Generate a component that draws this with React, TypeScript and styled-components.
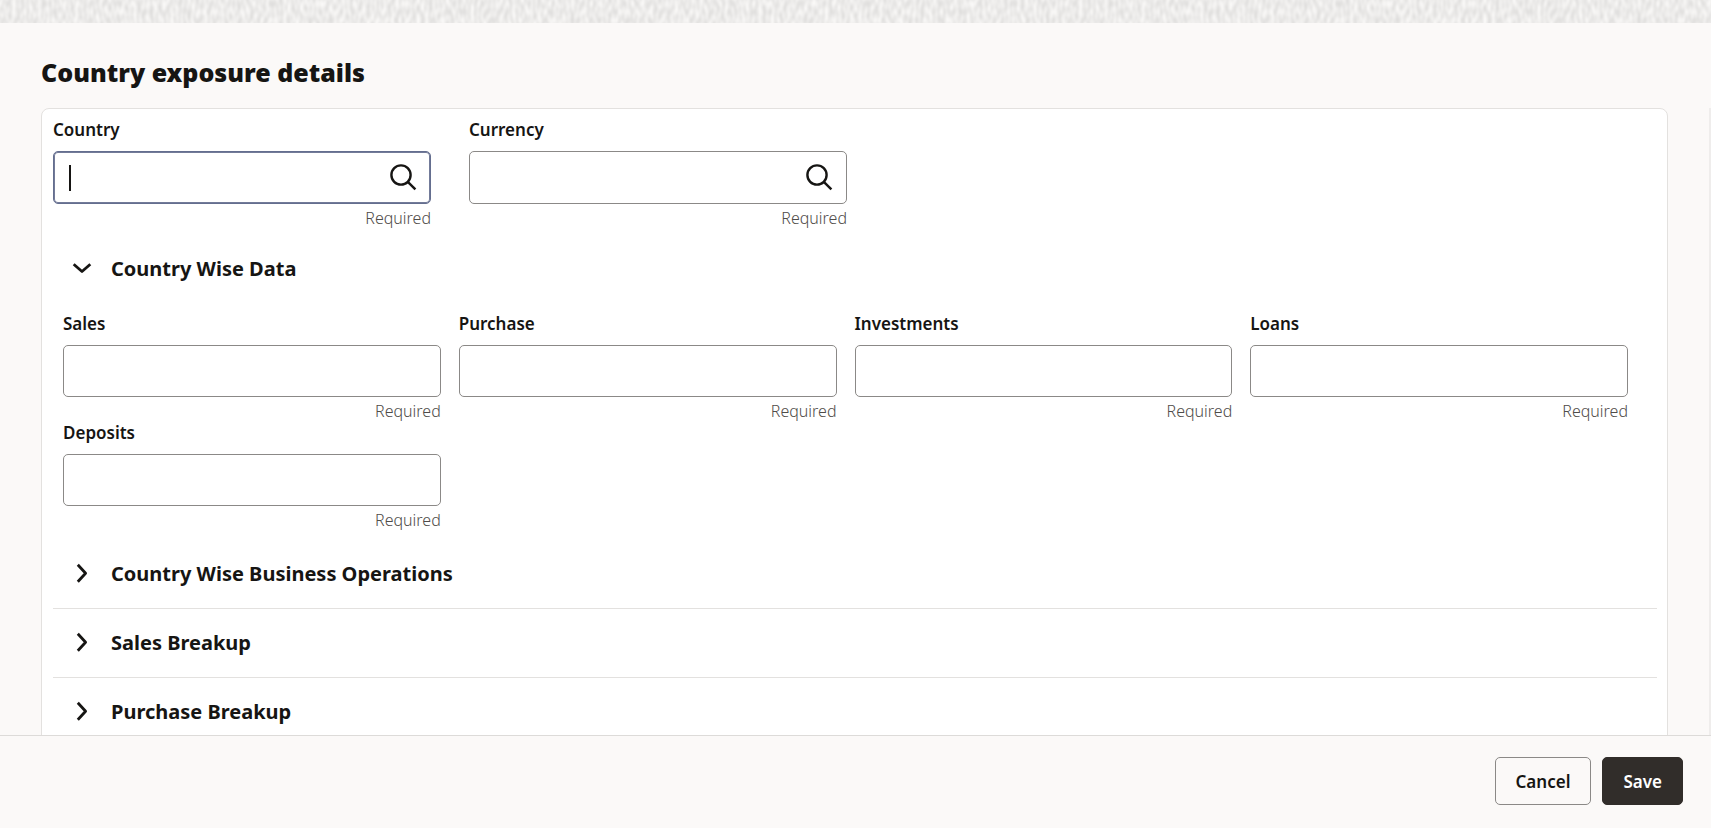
import React, { useId, useState } from "react";
import styled, { createGlobalStyle, css } from "styled-components";

const GlobalStyle = createGlobalStyle`
  *, *::before, *::after { box-sizing: border-box; }
  body {
    margin: 0;
    background: #fbf9f8;
    color: #161513;
    font-family: "Noto Sans", "Open Sans", sans-serif;
    font-size: 16px;
  }
`;

const Shell = styled.div`
  display: flex;
  flex-direction: column;
  height: 100vh;
`;

const Texture = styled.svg`
  display: block;
  flex: none;
  width: 100%;
  height: 23px;
`;

const Main = styled.main`
  flex: 1;
  min-height: 0;
  overflow: auto;
  scrollbar-width: none;
`;

const PageTitle = styled.h1`
  margin: 0;
  padding: 31px 41px 18px;
  font-size: 25px;
  line-height: 36px;
  font-weight: 900;
`;

const Columns = styled.div`
  display: flex;
  gap: 41px;
  padding-left: 41px;
`;

const Card = styled.form`
  flex: 1;
  min-width: 0;
  padding: 8px 10px 11px 11px;
  background: #fff;
  border: 1px solid #e3e1df;
  border-radius: 8px 8px 0 0;
`;

const NextPanel = styled.aside`
  flex: none;
  width: 2px;
  background: #efedec;
`;

const LookupRow = styled.div`
  display: grid;
  grid-template-columns: repeat(2, minmax(0, 378px));
  gap: 38px;
  margin-bottom: 8px;
`;

const FieldGrid = styled.div`
  display: grid;
  grid-template-columns: repeat(4, minmax(0, 1fr));
  column-gap: 18px;
  padding: 8px 29px 10px 10px;
`;

const FieldRoot = styled.div`
  display: flex;
  flex-direction: column;
`;

const Label = styled.label`
  margin-bottom: 8px;
  font-size: 17px;
  line-height: 26px;
  font-weight: 600;
`;

const Control = styled.div<{ $active?: boolean; $lookup?: boolean }>`
  display: flex;
  align-items: center;
  height: ${(p) => (p.$lookup ? 53 : 52)}px;
  padding: 0 13px 0 15px;
  background: #fff;
  border: 1px solid #8b8987;
  border-radius: 5px;
  ${(p) =>
    p.$active &&
    css`
      border-color: #646e8f;
      box-shadow: inset 0 0 0 1px #737b99;
    `}
`;

const Caret = styled.span`
  flex: none;
  width: 2px;
  height: 26px;
  background: #161513;
`;

const Input = styled.input`
  flex: 1;
  min-width: 0;
  height: 100%;
  padding: 0;
  border: 0;
  outline: 0;
  background: transparent;
  color: inherit;
  font: inherit;
`;

const IconButton = styled.button`
  display: flex;
  flex: none;
  padding: 0;
  border: 0;
  background: none;
  color: inherit;
  cursor: pointer;
`;

const Hint = styled.span`
  padding-top: 5px;
  align-self: flex-end;
  color: #4f4c49;
  font-size: 16px;
  line-height: 18px;
  font-weight: 300;
`;

const Section = styled.section<{ $ruled?: boolean }>`
  border-bottom: 1px solid ${(p) => (p.$ruled ? "#e3e1df" : "transparent")};
`;

const SectionHeading = styled.h2`
  margin: 0;
  font-size: 20px;
  line-height: 28px;
  font-weight: 700;
`;

const SectionToggle = styled.button`
  display: flex;
  align-items: center;
  gap: 15px;
  width: 100%;
  padding: 20px 16px;
  border: 0;
  background: none;
  color: inherit;
  font: inherit;
  text-align: left;
  cursor: pointer;
`;

const Footer = styled.footer`
  display: flex;
  flex: none;
  justify-content: flex-end;
  gap: 11px;
  padding: 21px 28px 23px;
  border-top: 1px solid #dddbd9;
`;

const Button = styled.button<{ $primary?: boolean }>`
  height: 48px;
  padding: 0 20px;
  border: 1px solid ${(p) => (p.$primary ? "#312d2a" : "#8b8987")};
  border-radius: 5px;
  background: ${(p) => (p.$primary ? "#312d2a" : "transparent")};
  color: ${(p) => (p.$primary ? "#fff" : "#161513")};
  font-family: inherit;
  font-size: 17px;
  font-weight: 600;
  cursor: pointer;
`;

const SearchIcon = () => (
  <svg width="28" height="28" viewBox="0 0 28 28" fill="none" stroke="currentColor" strokeWidth="2.4" aria-hidden="true">
    <circle cx="12" cy="11" r="9.6" />
    <path d="M18.8 17.8 26.4 25.4" />
  </svg>
);

const Chevron = ({ open }: { open: boolean }) => (
  <svg width="27" height="26" viewBox="0 0 27 26" fill="none" stroke="currentColor" strokeWidth="2.8" strokeLinejoin="round" aria-hidden="true">
    <path d={open ? "M4.7 8.2 13 15.5 21.3 8.2" : "M8.8 3.7 16.6 12.2 8.8 20.7"} />
  </svg>
);

type FieldProps = { label: string; lookup?: boolean; active?: boolean };

function Field({ label, lookup, active }: FieldProps) {
  const id = useId();
  return (
    <FieldRoot>
      <Label htmlFor={id}>{label}</Label>
      <Control $active={active} $lookup={lookup}>
        {active && <Caret />}
        <Input id={id} type="text" required />
        {lookup && (
          <IconButton type="button" aria-label={`Search ${label}`}>
            <SearchIcon />
          </IconButton>
        )}
      </Control>
      <Hint>Required</Hint>
    </FieldRoot>
  );
}

type PanelProps = { title: string; initiallyOpen?: boolean; children?: React.ReactNode };

function Panel({ title, initiallyOpen = false, children }: PanelProps) {
  const [open, setOpen] = useState(initiallyOpen);
  return (
    <Section $ruled={!open}>
      <SectionHeading>
        <SectionToggle type="button" aria-expanded={open} onClick={() => setOpen(!open)}>
          <Chevron open={open} />
          {title}
        </SectionToggle>
      </SectionHeading>
      {open && children}
    </Section>
  );
}

const amounts = ["Sales", "Purchase", "Investments", "Loans", "Deposits"];
const breakups = ["Country Wise Business Operations", "Sales Breakup", "Purchase Breakup"];

export default function App() {
  return (
    <>
      <GlobalStyle />
      <Shell>
        <Texture aria-hidden="true">
          <filter id="weave" x="0" y="0" width="100%" height="100%" colorInterpolationFilters="sRGB">
            <feTurbulence type="fractalNoise" baseFrequency="0.24 0.12" numOctaves="1" seed="4" />
            <feColorMatrix values="0.17 0 0 0 0.842  0.17 0 0 0 0.838  0.17 0 0 0 0.833  0 0 0 0 1" />
          </filter>
          <rect width="100%" height="100%" filter="url(#weave)" />
        </Texture>
        <Main>
          <PageTitle>Country exposure details</PageTitle>
          <Columns>
            <Card id="exposure" onSubmit={(e) => e.preventDefault()}>
              <LookupRow>
                <Field label="Country" lookup active />
                <Field label="Currency" lookup />
              </LookupRow>
              <Panel title="Country Wise Data" initiallyOpen>
                <FieldGrid>
                  {amounts.map((name) => (
                    <Field key={name} label={name} />
                  ))}
                </FieldGrid>
              </Panel>
              {breakups.map((name) => (
                <Panel key={name} title={name} />
              ))}
            </Card>
            <NextPanel />
          </Columns>
        </Main>
        <Footer>
          <Button type="button">Cancel</Button>
          <Button type="submit" form="exposure" $primary>
            Save
          </Button>
        </Footer>
      </Shell>
    </>
  );
}
